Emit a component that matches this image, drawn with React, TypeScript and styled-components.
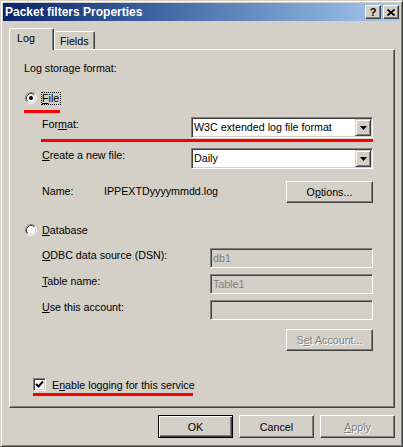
import React from "react";
import styled, { createGlobalStyle } from "styled-components";

const GlobalStyle = createGlobalStyle`
  html, body { margin: 0; padding: 0; background: #ffffff; }
  body {
    font-family: "Liberation Sans", Arial, sans-serif;
    font-size: 10.7px;
    color: #000000;
  }
  * { box-sizing: border-box; }
`;

const Window = styled.div`
  width: 403px;
  height: 447px;
  background: #d4d0c8;
  border: 1px solid;
  border-color: #d4d0c8 #404040 #404040 #d4d0c8;
  box-shadow: inset 1px 1px 0 #ffffff, inset -1px -1px 0 #808080;
  padding: 2px;
  display: flex;
  flex-direction: column;
`;

const TitleBar = styled.div`
  height: 18px;
  flex: none;
  display: flex;
  align-items: center;
  gap: 2px;
  padding: 0 1px 0 2px;
  background: linear-gradient(to right, #0a246a 0%, #3a5e9c 35%, #a6caf0 100%);
`;

const Title = styled.div`
  flex: 1;
  color: #ffffff;
  font-weight: bold;
  font-size: 12px;
  line-height: 18px;
  white-space: nowrap;
`;

const CaptionButton = styled.div`
  width: 16px;
  height: 14px;
  flex: none;
  background: #d4d0c8;
  border: 1px solid;
  border-color: #ffffff #404040 #404040 #ffffff;
  box-shadow: inset -1px -1px 0 #808080;
  display: flex;
  align-items: center;
  justify-content: center;
  font-weight: bold;
  font-size: 11px;
  line-height: 12px;
  color: #000000;
`;

const Body = styled.div`
  flex: 1;
  display: flex;
  flex-direction: column;
  padding: 7px 5px 6px 6px;
`;

const TabRow = styled.div`
  height: 21px;
  flex: none;
  display: flex;
  align-items: flex-end;
`;

const Tab = styled.div<{ $active?: boolean; $w: number }>`
  position: relative;
  z-index: ${(p) => (p.$active ? 1 : 0)};
  width: ${(p) => p.$w}px;
  height: ${(p) => (p.$active ? 22 : 18)}px;
  margin-bottom: ${(p) => (p.$active ? -1 : 0)}px;
  background: #d4d0c8;
  border-style: solid;
  border-width: 1px 1px 0 1px;
  border-color: #ffffff #404040 transparent #ffffff;
  border-radius: 2px 2px 0 0;
  box-shadow: inset -1px 0 0 #808080;
  padding: 3px 0 0 ${(p) => (p.$active ? 7 : 5)}px;
  line-height: 13px;
  white-space: nowrap;
`;

const Panel = styled.div`
  height: 359px;
  flex: none;
  border: 1px solid;
  border-color: #ffffff #404040 #404040 #ffffff;
  box-shadow: inset -1px -1px 0 #808080;
  padding: 0 21px 0 14px;
  display: flex;
  flex-direction: column;
`;

const Heading = styled.div`
  margin-top: 12px;
  height: 13px;
  line-height: 13px;
`;

const RadioRow = styled.div<{ $mt: number }>`
  position: relative;
  margin-top: ${(p) => p.$mt}px;
  height: 14px;
  display: flex;
  align-items: center;
  padding-left: 1px;
`;

const RadioLabel = styled.span<{ $focus?: boolean }>`
  display: inline-block;
  margin-left: 5px;
  padding: 0 1px 0 0;
  line-height: 11px;
  height: 11px;
  outline: ${(p) => (p.$focus ? "1px dotted #000000" : "none")};
`;

const FieldRow = styled.div<{ $mt: number; $h: number }>`
  position: relative;
  margin-top: ${(p) => p.$mt}px;
  height: ${(p) => p.$h}px;
  display: flex;
  align-items: flex-start;
  padding-left: 18px;
`;

const FieldLabel = styled.div<{ $w: number; $pt: number }>`
  flex: none;
  width: ${(p) => p.$w}px;
  padding-top: ${(p) => p.$pt}px;
  line-height: 13px;
  white-space: nowrap;
`;

const Value = styled.div`
  padding-top: 4px;
  line-height: 13px;
  white-space: nowrap;
`;

const Combo = styled.div<{ $w: number }>`
  flex: none;
  width: ${(p) => p.$w}px;
  height: 21px;
  background: #ffffff;
  border: 1px solid;
  border-color: #808080 #ffffff #ffffff #808080;
  box-shadow: inset 1px 1px 0 #404040, inset -1px -1px 0 #d4d0c8;
  padding: 1px;
  display: flex;
`;

const ComboText = styled.div`
  flex: 1;
  padding-left: 1px;
  line-height: 17px;
  white-space: nowrap;
  overflow: hidden;
`;

const ArrowButton = styled.div`
  flex: none;
  width: 16px;
  height: 17px;
  background: #d4d0c8;
  border: 1px solid;
  border-color: #d4d0c8 #404040 #404040 #d4d0c8;
  box-shadow: inset 1px 1px 0 #ffffff, inset -1px -1px 0 #808080;
  display: flex;
  align-items: center;
  justify-content: center;
`;

const TextBox = styled.div<{ $w: number }>`
  flex: none;
  width: ${(p) => p.$w}px;
  height: 20px;
  background: #d4d0c8;
  border: 1px solid;
  border-color: #808080 #ffffff #ffffff #808080;
  box-shadow: inset 1px 1px 0 #404040, inset -1px -1px 0 #d4d0c8;
  padding-left: 2px;
  line-height: 18px;
  color: #808080;
  white-space: nowrap;
`;

const PushButton = styled.div<{ $w: number; $h: number; $default?: boolean; $disabled?: boolean }>`
  flex: none;
  width: ${(p) => p.$w}px;
  height: ${(p) => p.$h}px;
  background: #d4d0c8;
  border: 1px solid;
  border-color: ${(p) => (p.$default ? "#000000" : "#ffffff #404040 #404040 #ffffff")};
  box-shadow: ${(p) =>
    p.$default
      ? "inset 1px 1px 0 #ffffff, inset -1px -1px 0 #404040, inset -2px -2px 0 #808080"
      : "inset -1px -1px 0 #808080"};
  display: flex;
  align-items: center;
  justify-content: center;
  color: ${(p) => (p.$disabled ? "#808080" : "#000000")};
  text-shadow: ${(p) => (p.$disabled ? "1px 1px 0 #ffffff" : "none")};
  white-space: nowrap;
`;

const Spacer = styled.div`
  flex: 1;
`;

const ButtonBox = styled.div`
  margin-left: auto;
  display: flex;
`;

const CheckRow = styled.div`
  position: relative;
  margin-top: 27px;
  height: 13px;
  display: flex;
  align-items: center;
  padding-left: 9px;
  gap: 6px;
`;

const CheckBox = styled.div`
  width: 13px;
  height: 13px;
  flex: none;
  background: #ffffff;
  border: 1px solid;
  border-color: #808080 #ffffff #ffffff #808080;
  box-shadow: inset 1px 1px 0 #404040, inset -1px -1px 0 #d4d0c8;
  display: flex;
  align-items: center;
  justify-content: center;
`;

const RedMark = styled.div<{ $top: number; $left: number; $w: number }>`
  position: absolute;
  top: ${(p) => p.$top}px;
  left: ${(p) => p.$left}px;
  width: ${(p) => p.$w}px;
  height: 3px;
  background: #ff0000;
`;

const ButtonRow = styled.div`
  margin-top: 7px;
  height: 23px;
  flex: none;
  display: flex;
  justify-content: flex-end;
  gap: 6px;
`;

const Mn = styled.span`
  text-decoration: underline;
  text-underline-offset: 1px;
`;

const Radio: React.FC<{ checked?: boolean }> = ({ checked }) => (
  <svg width="12" height="12" viewBox="0 0 12 12" style={{ flex: "none" }}>
    <circle cx="6" cy="6" r="4.5" fill="#ffffff" />
    <path d="M2.11 9.89 A5.5 5.5 0 0 1 9.89 2.11" stroke="#808080" fill="none" strokeWidth="1" />
    <path d="M9.89 2.11 A5.5 5.5 0 0 1 2.11 9.89" stroke="#ffffff" fill="none" strokeWidth="1" />
    <path d="M2.82 9.18 A4.5 4.5 0 0 1 9.18 2.82" stroke="#404040" fill="none" strokeWidth="1" />
    <path d="M9.18 2.82 A4.5 4.5 0 0 1 2.82 9.18" stroke="#d4d0c8" fill="none" strokeWidth="1" />
    {checked && <circle cx="6" cy="6" r="2" fill="#000000" />}
  </svg>
);

const DownArrow = () => (
  <svg width="7" height="4" viewBox="0 0 7 4">
    <polygon points="0,0 7,0 3.5,4" fill="#000000" />
  </svg>
);

export default function App() {
  return (
    <>
      <GlobalStyle />
      <Window>
        <TitleBar>
          <Title>Packet filters Properties</Title>
          <CaptionButton>?</CaptionButton>
          <CaptionButton>
            <svg width="8" height="7" viewBox="0 0 8 7">
              <path d="M0.5 0.5 L7.5 6.5 M7.5 0.5 L0.5 6.5" stroke="#000000" strokeWidth="1.7" />
            </svg>
          </CaptionButton>
        </TitleBar>
        <Body>
          <TabRow>
            <Tab $active $w={45}>Log</Tab>
            <Tab $w={41}>Fields</Tab>
          </TabRow>
          <Panel>
            <Heading>Log storage format:</Heading>

            <RadioRow $mt={16}>
              <Radio checked />
              <RadioLabel $focus>
                <Mn>F</Mn>ile
              </RadioLabel>
              <RedMark $top={19} $left={0} $w={36} />
            </RadioRow>

            <FieldRow $mt={12} $h={21}>
              <FieldLabel $w={149} $pt={1}>
                For<Mn>m</Mn>at:
              </FieldLabel>
              <Combo $w={182}>
                <ComboText>W3C extended log file format</ComboText>
                <ArrowButton>
                  <DownArrow />
                </ArrowButton>
              </Combo>
              <RedMark $top={22} $left={17} $w={332} />
            </FieldRow>

            <FieldRow $mt={10} $h={21}>
              <FieldLabel $w={149} $pt={1}>
                <Mn>C</Mn>reate a new file:
              </FieldLabel>
              <Combo $w={182}>
                <ComboText>Daily</ComboText>
                <ArrowButton>
                  <DownArrow />
                </ArrowButton>
              </Combo>
            </FieldRow>

            <FieldRow $mt={12} $h={22}>
              <FieldLabel $w={62} $pt={4}>
                Name:
              </FieldLabel>
              <Value>IPPEXTDyyyymmdd.log</Value>
              <Spacer />
              <ButtonBox>
                <PushButton $w={87} $h={22}>
                  O<Mn>p</Mn>tions...
                </PushButton>
              </ButtonBox>
            </FieldRow>

            <RadioRow $mt={20}>
              <Radio />
              <RadioLabel>
                <Mn>D</Mn>atabase
              </RadioLabel>
            </RadioRow>

            <FieldRow $mt={11} $h={20}>
              <FieldLabel $w={168} $pt={1}>
                <Mn>O</Mn>DBC data source (DSN):
              </FieldLabel>
              <TextBox $w={163}>db1</TextBox>
            </FieldRow>

            <FieldRow $mt={6} $h={20}>
              <FieldLabel $w={168} $pt={1}>
                <Mn>T</Mn>able name:
              </FieldLabel>
              <TextBox $w={163}>Table1</TextBox>
            </FieldRow>

            <FieldRow $mt={6} $h={20}>
              <FieldLabel $w={168} $pt={1}>
                <Mn>U</Mn>se this account:
              </FieldLabel>
              <TextBox $w={163} />
            </FieldRow>

            <FieldRow $mt={9} $h={22}>
              <ButtonBox>
                <PushButton $w={87} $h={22} $disabled>
                  S<Mn>e</Mn>t Account...
                </PushButton>
              </ButtonBox>
            </FieldRow>

            <CheckRow>
              <CheckBox>
                <svg width="9" height="9" viewBox="0 0 9 9">
                  <path d="M1 4 L3.5 6.5 L8 1.5" stroke="#000000" strokeWidth="2" fill="none" />
                </svg>
              </CheckBox>
              <span>
                E<Mn>n</Mn>able logging for this service
              </span>
              <RedMark $top={15} $left={9} $w={160} />
            </CheckRow>
          </Panel>
          <ButtonRow>
            <PushButton $w={75} $h={23} $default>
              OK
            </PushButton>
            <PushButton $w={75} $h={23}>
              Cancel
            </PushButton>
            <PushButton $w={75} $h={23} $disabled>
              <Mn>A</Mn>pply
            </PushButton>
          </ButtonRow>
        </Body>
      </Window>
    </>
  );
}
